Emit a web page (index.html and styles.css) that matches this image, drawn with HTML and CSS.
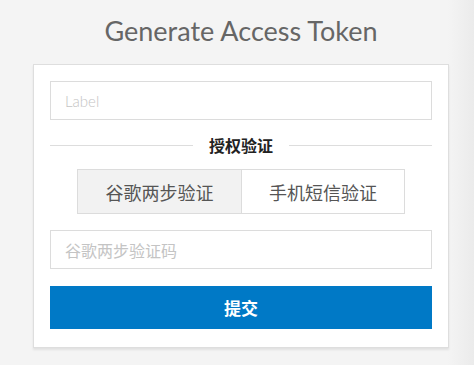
FILE: index.html
```html
<!DOCTYPE html>
<html lang="zh">
<head>
<meta charset="utf-8">
<title>Generate Access Token</title>
<link rel="stylesheet" href="styles.css">
</head>
<body>
<div class="page">
  <h1 class="title">Generate Access Token</h1>
  <form class="card">
    <input class="field" type="text" placeholder="Label">
    <div class="section">
      <span class="rule"></span>
      <span class="section-label">授权验证</span>
      <span class="rule"></span>
    </div>
    <div class="tabs">
      <button type="button" class="tab active">谷歌两步验证</button>
      <button type="button" class="tab">手机短信验证</button>
    </div>
    <input class="field field-cjk" type="text" placeholder="谷歌两步验证码">
    <button type="button" class="submit">提交</button>
  </form>
</div>
</body>
</html>
```

FILE: styles.css
```css
* { box-sizing: border-box; }

html, body {
  margin: 0;
  height: 100%;
}

body {
  background: linear-gradient(to right, #f4f4f4 0, #f4f4f4 448px, #ebebeb 474px);
  font-family: Lato, "Noto Sans CJK SC", sans-serif;
}

.page {
  width: 416px;
  margin-left: 33px;
  padding-top: 12px;
}

.title {
  margin: 0 0 14px;
  font-family: Lato, sans-serif;
  font-weight: 400;
  font-size: 27px;
  line-height: 38px;
  color: #666;
  text-align: center;
}

.card {
  background: #fff;
  border: 1px solid #dedede;
  box-shadow: 0 2px 2px rgba(0,0,0,0.08);
  padding: 16px 16px 18px;
  display: flex;
  flex-direction: column;
}

.field {
  display: block;
  width: 100%;
  height: 39px;
  border: 1px solid #dcdcdc;
  background: #fff;
  padding: 0 14px;
  font-family: Lato, "Noto Sans CJK SC", sans-serif;
  font-weight: 300;
  font-size: 15px;
  color: #333;
  outline: none;
}

.field::placeholder { color: #c4c4c4; }

.field-cjk {
  font-family: "Noto Sans CJK SC", sans-serif;
  font-weight: 400;
  font-size: 16px;
}

.section {
  display: flex;
  align-items: center;
  gap: 16px;
  margin-top: 17px;
  height: 16px;
}

.rule {
  flex: 1;
  height: 1px;
  background: #dddddd;
}

.section-label {
  font-family: "Noto Sans CJK SC", sans-serif;
  font-weight: 700;
  font-size: 16px;
  line-height: 16px;
  color: #222;
}

.tabs {
  display: flex;
  align-self: center;
  margin-top: 16px;
  margin-bottom: 16px;
  border: 1px solid #dcdcdc;
}

.tab {
  width: 163px;
  height: 43px;
  border: 0;
  background: #fff;
  font-family: "Noto Sans CJK SC", sans-serif;
  font-size: 18px;
  color: #555;
  padding: 0;
  cursor: pointer;
}

.tab + .tab { border-left: 1px solid #dcdcdc; }

.tab.active { background: #f2f2f2; }

.submit {
  margin-top: 17px;
  height: 43px;
  width: 100%;
  border: 0;
  background: #0079c6;
  color: #fff;
  font-family: "Noto Sans CJK SC", sans-serif;
  font-weight: 700;
  font-size: 17px;
  cursor: pointer;
}
```
